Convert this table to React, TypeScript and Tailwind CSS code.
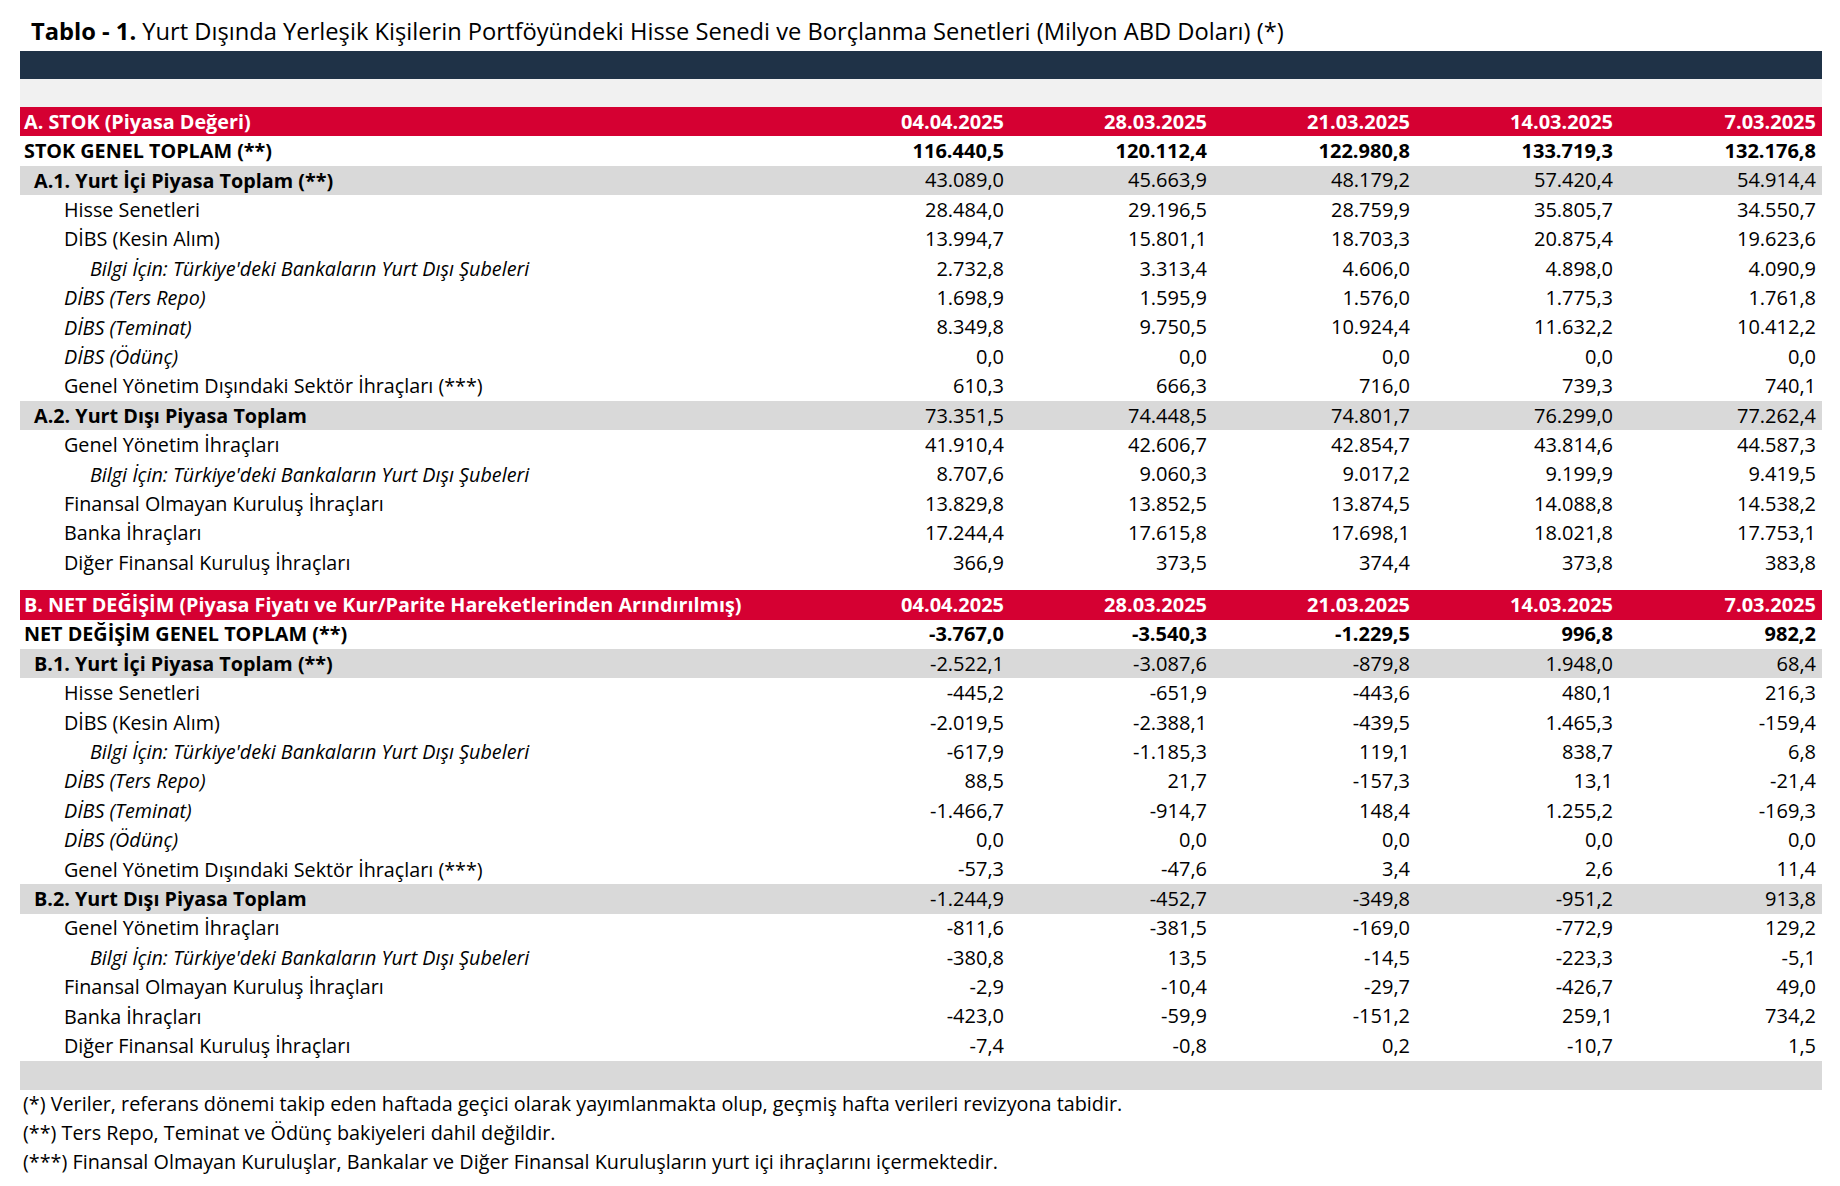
import React from 'react';

type RowKind = 'head' | 'grand' | 'sub' | 'item' | 'italic' | 'info';

type Row = {
	kind: RowKind;
	label: string;
	values: string[];
};

const stokRows: Row[] = [
	{ kind: 'head', label: 'A. STOK (Piyasa Değeri)', values: ['04.04.2025', '28.03.2025', '21.03.2025', '14.03.2025', '7.03.2025'] },
	{ kind: 'grand', label: 'STOK GENEL TOPLAM (**)', values: ['116.440,5', '120.112,4', '122.980,8', '133.719,3', '132.176,8'] },
	{ kind: 'sub', label: 'A.1. Yurt İçi Piyasa Toplam (**)', values: ['43.089,0', '45.663,9', '48.179,2', '57.420,4', '54.914,4'] },
	{ kind: 'item', label: 'Hisse Senetleri', values: ['28.484,0', '29.196,5', '28.759,9', '35.805,7', '34.550,7'] },
	{ kind: 'item', label: 'DİBS (Kesin Alım)', values: ['13.994,7', '15.801,1', '18.703,3', '20.875,4', '19.623,6'] },
	{ kind: 'info', label: "Bilgi İçin: Türkiye'deki Bankaların Yurt Dışı Şubeleri", values: ['2.732,8', '3.313,4', '4.606,0', '4.898,0', '4.090,9'] },
	{ kind: 'italic', label: 'DİBS (Ters Repo)', values: ['1.698,9', '1.595,9', '1.576,0', '1.775,3', '1.761,8'] },
	{ kind: 'italic', label: 'DİBS (Teminat)', values: ['8.349,8', '9.750,5', '10.924,4', '11.632,2', '10.412,2'] },
	{ kind: 'italic', label: 'DİBS (Ödünç)', values: ['0,0', '0,0', '0,0', '0,0', '0,0'] },
	{ kind: 'item', label: 'Genel Yönetim Dışındaki Sektör İhraçları (***)', values: ['610,3', '666,3', '716,0', '739,3', '740,1'] },
	{ kind: 'sub', label: 'A.2. Yurt Dışı Piyasa Toplam', values: ['73.351,5', '74.448,5', '74.801,7', '76.299,0', '77.262,4'] },
	{ kind: 'item', label: 'Genel Yönetim İhraçları', values: ['41.910,4', '42.606,7', '42.854,7', '43.814,6', '44.587,3'] },
	{ kind: 'info', label: "Bilgi İçin: Türkiye'deki Bankaların Yurt Dışı Şubeleri", values: ['8.707,6', '9.060,3', '9.017,2', '9.199,9', '9.419,5'] },
	{ kind: 'item', label: 'Finansal Olmayan Kuruluş İhraçları', values: ['13.829,8', '13.852,5', '13.874,5', '14.088,8', '14.538,2'] },
	{ kind: 'item', label: 'Banka İhraçları', values: ['17.244,4', '17.615,8', '17.698,1', '18.021,8', '17.753,1'] },
	{ kind: 'item', label: 'Diğer Finansal Kuruluş İhraçları', values: ['366,9', '373,5', '374,4', '373,8', '383,8'] },
];

const netRows: Row[] = [
	{ kind: 'head', label: 'B. NET DEĞİŞİM (Piyasa Fiyatı ve Kur/Parite Hareketlerinden Arındırılmış)', values: ['04.04.2025', '28.03.2025', '21.03.2025', '14.03.2025', '7.03.2025'] },
	{ kind: 'grand', label: 'NET DEĞİŞİM GENEL TOPLAM (**)', values: ['-3.767,0', '-3.540,3', '-1.229,5', '996,8', '982,2'] },
	{ kind: 'sub', label: 'B.1. Yurt İçi Piyasa Toplam (**)', values: ['-2.522,1', '-3.087,6', '-879,8', '1.948,0', '68,4'] },
	{ kind: 'item', label: 'Hisse Senetleri', values: ['-445,2', '-651,9', '-443,6', '480,1', '216,3'] },
	{ kind: 'item', label: 'DİBS (Kesin Alım)', values: ['-2.019,5', '-2.388,1', '-439,5', '1.465,3', '-159,4'] },
	{ kind: 'info', label: "Bilgi İçin: Türkiye'deki Bankaların Yurt Dışı Şubeleri", values: ['-617,9', '-1.185,3', '119,1', '838,7', '6,8'] },
	{ kind: 'italic', label: 'DİBS (Ters Repo)', values: ['88,5', '21,7', '-157,3', '13,1', '-21,4'] },
	{ kind: 'italic', label: 'DİBS (Teminat)', values: ['-1.466,7', '-914,7', '148,4', '1.255,2', '-169,3'] },
	{ kind: 'italic', label: 'DİBS (Ödünç)', values: ['0,0', '0,0', '0,0', '0,0', '0,0'] },
	{ kind: 'item', label: 'Genel Yönetim Dışındaki Sektör İhraçları (***)', values: ['-57,3', '-47,6', '3,4', '2,6', '11,4'] },
	{ kind: 'sub', label: 'B.2. Yurt Dışı Piyasa Toplam', values: ['-1.244,9', '-452,7', '-349,8', '-951,2', '913,8'] },
	{ kind: 'item', label: 'Genel Yönetim İhraçları', values: ['-811,6', '-381,5', '-169,0', '-772,9', '129,2'] },
	{ kind: 'info', label: "Bilgi İçin: Türkiye'deki Bankaların Yurt Dışı Şubeleri", values: ['-380,8', '13,5', '-14,5', '-223,3', '-5,1'] },
	{ kind: 'item', label: 'Finansal Olmayan Kuruluş İhraçları', values: ['-2,9', '-10,4', '-29,7', '-426,7', '49,0'] },
	{ kind: 'item', label: 'Banka İhraçları', values: ['-423,0', '-59,9', '-151,2', '259,1', '734,2'] },
	{ kind: 'item', label: 'Diğer Finansal Kuruluş İhraçları', values: ['-7,4', '-0,8', '0,2', '-10,7', '1,5'] },
];

const rowStyle: Record<RowKind, { row: string; label: string }> = {
	head: { row: 'bg-[#d50032] text-white font-bold', label: 'pl-[4px]' },
	grand: { row: 'bg-white text-black font-bold', label: 'pl-[4px]' },
	sub: { row: 'bg-[#d9d9d9] text-black', label: 'pl-[14px] font-bold' },
	item: { row: 'bg-white text-black', label: 'pl-[44px]' },
	italic: { row: 'bg-white text-black', label: 'pl-[44px] italic' },
	info: { row: 'bg-white text-black', label: 'pl-[70px] italic' },
};

function TableRow({ row }: { row: Row }) {
	const s = rowStyle[row.kind];
	return (
		<div className={`flex h-[29.4px] items-center leading-none ${s.row}`}>
			<div className={`w-[787px] shrink-0 whitespace-nowrap text-[19.75px] ${s.label}`}>{row.label}</div>
			{row.values.map((v, i) => (
				<div key={i} className="w-[203px] shrink-0 pr-[6px] text-right text-[20px]">
					{v}
				</div>
			))}
		</div>
	);
}

export default function App() {
	return (
		<div className="min-h-screen bg-white pl-[20px] pr-[18px] font-['Open_Sans',sans-serif] text-black">
			<div className="h-[51px] pl-[11px] pt-[16px] text-[23.7px] leading-[30px] whitespace-nowrap">
				<span className="font-bold">Tablo - 1.</span> Yurt Dışında Yerleşik Kişilerin Portföyündeki Hisse Senedi ve Borçlanma Senetleri (Milyon ABD Doları) (*)
			</div>
			<div className="h-[28px] bg-[#1f3247]" />
			<div className="h-[28px] bg-[#f1f1f1]" />
			{stokRows.map((r, i) => (
				<TableRow key={`a${i}`} row={r} />
			))}
			<div className="h-[13px]" />
			{netRows.map((r, i) => (
				<TableRow key={`b${i}`} row={r} />
			))}
			<div className="h-[29px] bg-[#d9d9d9]" />
			<div className="flex flex-col pl-[3px] pt-[0px] text-[19.8px]">
				<div className="flex h-[29px] items-center">(*) Veriler, referans dönemi takip eden haftada geçici olarak yayımlanmakta olup, geçmiş hafta verileri revizyona tabidir.</div>
				<div className="flex h-[29px] items-center">(**) Ters Repo, Teminat ve Ödünç bakiyeleri dahil değildir.</div>
				<div className="flex h-[29px] items-center">(***) Finansal Olmayan Kuruluşlar, Bankalar ve Diğer Finansal Kuruluşların yurt içi ihraçlarını içermektedir.</div>
			</div>
		</div>
	);
}
